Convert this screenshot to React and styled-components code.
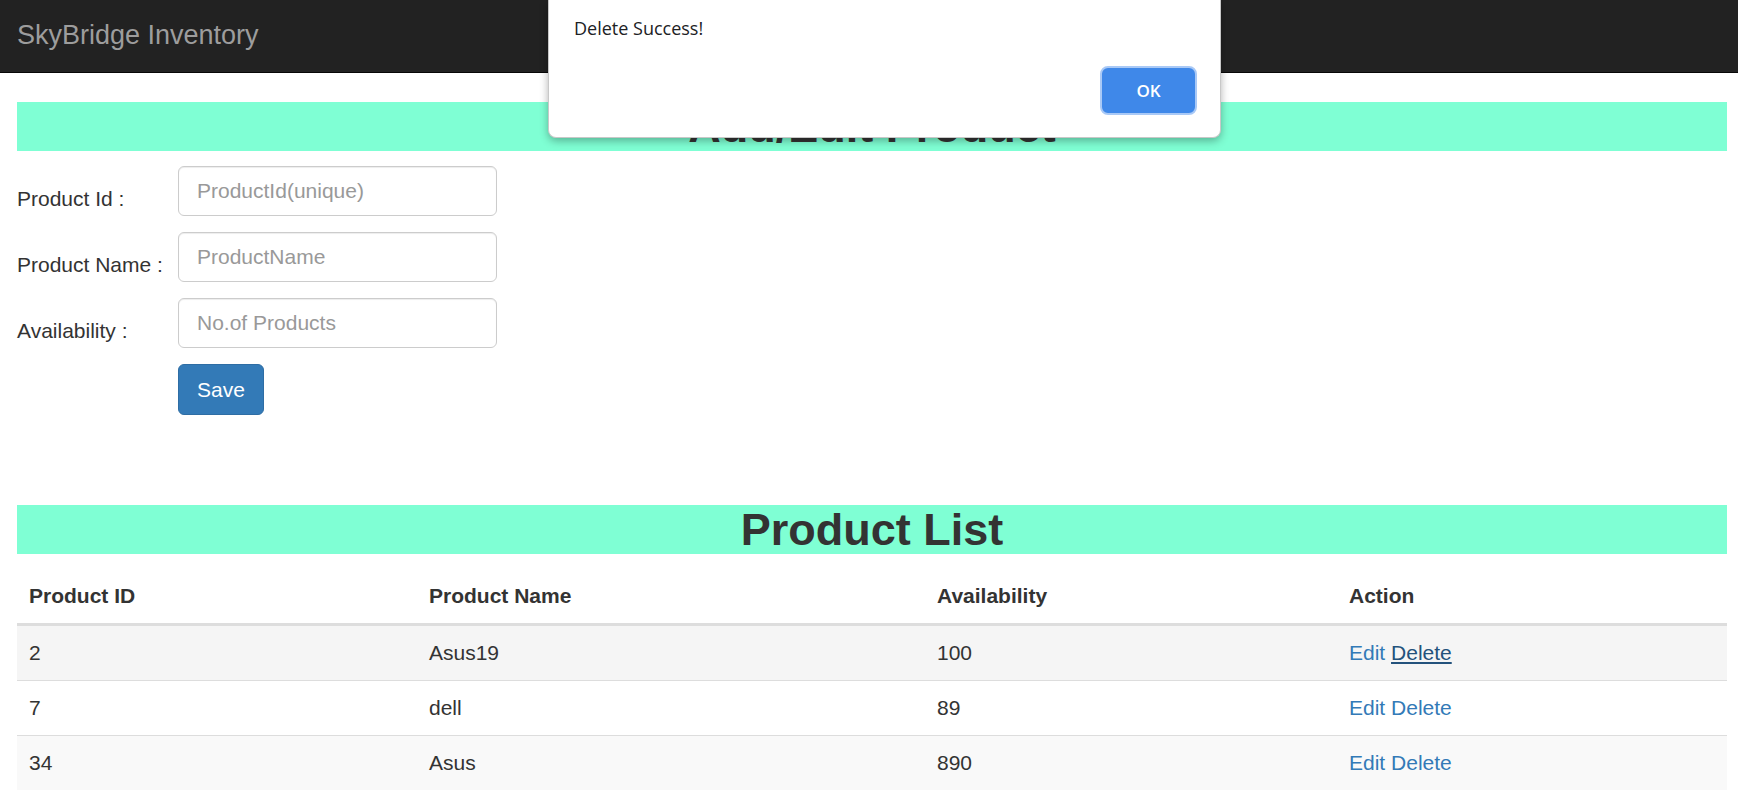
import React from "react";
import styled, { createGlobalStyle } from "styled-components";

const Global = createGlobalStyle`
  html, body {
    margin: 0;
    padding: 0;
    background: #fff;
  }
  body {
    font-family: "Liberation Sans", Arial, sans-serif;
    font-size: 21px;
    color: #333;
    overflow: hidden;
  }
`;

const Navbar = styled.div`
  height: 72px;
  background: #222;
  border-bottom: 1px solid #080808;
  display: flex;
  align-items: center;
  padding-left: 17px;
`;

const Brand = styled.div`
  font-size: 27px;
  color: #9d9d9d;
  line-height: 30px;
  margin-top: -3px;
`;

const Page = styled.div`
  padding: 29px 11px 0 17px;
`;

const Heading = styled.h1`
  margin: 0;
  height: 49px;
  line-height: 49px;
  background: #7fffd4;
  text-align: center;
  font-size: 45px;
  font-weight: bold;
  color: #333;
  overflow: visible;
  margin-top: ${p => p.$top || 0}px;
`;

const Form = styled.form`
  display: flex;
  flex-direction: column;
  gap: 16px;
  margin-top: 15px;
`;

const Row = styled.div`
  display: flex;
`;

const Label = styled.label`
  width: 161px;
  padding-top: 18px;
  line-height: 30px;
  font-size: 21px;
`;

const Input = styled.input`
  box-sizing: border-box;
  width: 319px;
  height: 50px;
  padding: 0 18px;
  border: 1px solid #ccc;
  border-radius: 6px;
  box-shadow: inset 0 1px 1px rgba(0, 0, 0, 0.075);
  font-family: "Liberation Sans", Arial, sans-serif;
  font-size: 21px;
  color: #555;
  &::placeholder {
    color: #999;
  }
`;

const SaveButton = styled.button`
  margin-left: 161px;
  height: 51px;
  padding: 0 18px;
  background: #337ab7;
  border: 1px solid #2e6da4;
  border-radius: 6px;
  color: #fff;
  font-family: "Liberation Sans", Arial, sans-serif;
  font-size: 21px;
`;

const Table = styled.table`
  width: 1710px;
  border-collapse: collapse;
  margin-top: 15px;
  table-layout: fixed;
`;

const Th = styled.th`
  text-align: left;
  padding: 12px;
  line-height: 30px;
  font-size: 21px;
  font-weight: bold;
  border-bottom: 3px solid #ddd;
  width: ${p => (p.$w ? `${p.$w}px` : "auto")};
`;

const Tr = styled.tr`
  background: ${p => p.$bg || "#fff"};
`;

const Td = styled.td`
  padding: 12px;
  line-height: 30px;
  font-size: 21px;
  border-top: ${p => (p.$first ? "none" : "1px solid #ddd")};
`;

const Link = styled.a`
  color: ${p => (p.$hover ? "#23527c" : "#337ab7")};
  text-decoration: ${p => (p.$hover ? "underline" : "none")};
  cursor: pointer;
`;

const Dialog = styled.div`
  position: absolute;
  top: 0;
  left: 548px;
  width: 673px;
  height: 138px;
  box-sizing: border-box;
  background: #fff;
  border: 1px solid #c8c8c8;
  border-top: none;
  border-radius: 0 0 8px 8px;
  box-shadow: 0 3px 8px rgba(0, 0, 0, 0.3);
  padding: 0 23px 0 25px;
  display: flex;
  flex-direction: column;
  font-family: "Open Sans", "Noto Sans", sans-serif;
`;

const Message = styled.div`
  font-size: 18px;
  color: #202124;
  margin-top: 15px;
  line-height: 26px;
`;

const Actions = styled.div`
  display: flex;
  justify-content: flex-end;
  margin-top: 25px;
`;

const OkButton = styled.button`
  width: 97px;
  height: 49px;
  box-sizing: border-box;
  background: #3f88e9;
  border: 2px solid #a9c9f6;
  border-radius: 8px;
  color: #fff;
  font-family: "Open Sans", "Noto Sans", sans-serif;
  font-weight: 600;
  font-size: 17px;
`;

const products = [
  { id: 2, name: "Asus19", qty: 100, bg: "#f5f5f5", hover: true },
  { id: 7, name: "dell", qty: 89, bg: "#fff" },
  { id: 34, name: "Asus", qty: 890, bg: "#f9f9f9" }
];

const fields = [
  { label: "Product Id :", placeholder: "ProductId(unique)" },
  { label: "Product Name :", placeholder: "ProductName" },
  { label: "Availability :", placeholder: "No.of Products" }
];

export default function App() {
  return (
    <>
      <Global />
      <Navbar>
        <Brand>SkyBridge Inventory</Brand>
      </Navbar>

      <Page>
        <Heading>Add/Edit Product</Heading>
        <Form onSubmit={e => e.preventDefault()}>
          {fields.map(f => (
            <Row key={f.label}>
              <Label>{f.label}</Label>
              <Input placeholder={f.placeholder} />
            </Row>
          ))}
          <Row>
            <SaveButton type="submit">Save</SaveButton>
          </Row>
        </Form>

        <Heading $top={90}>Product List</Heading>
        <Table>
          <thead>
            <tr>
              <Th $w={376}>Product ID</Th>
              <Th $w={484}>Product Name</Th>
              <Th $w={388}>Availability</Th>
              <Th>Action</Th>
            </tr>
          </thead>
          <tbody>
            {products.map((p, i) => (
              <Tr key={p.id} $bg={p.bg}>
                <Td $first={i === 0}>{p.id}</Td>
                <Td $first={i === 0}>{p.name}</Td>
                <Td $first={i === 0}>{p.qty}</Td>
                <Td $first={i === 0}>
                  <Link>Edit</Link> <Link $hover={p.hover}>Delete</Link>
                </Td>
              </Tr>
            ))}
          </tbody>
        </Table>
      </Page>

      <Dialog>
        <Message>Delete Success!</Message>
        <Actions>
          <OkButton>OK</OkButton>
        </Actions>
      </Dialog>
    </>
  );
}
